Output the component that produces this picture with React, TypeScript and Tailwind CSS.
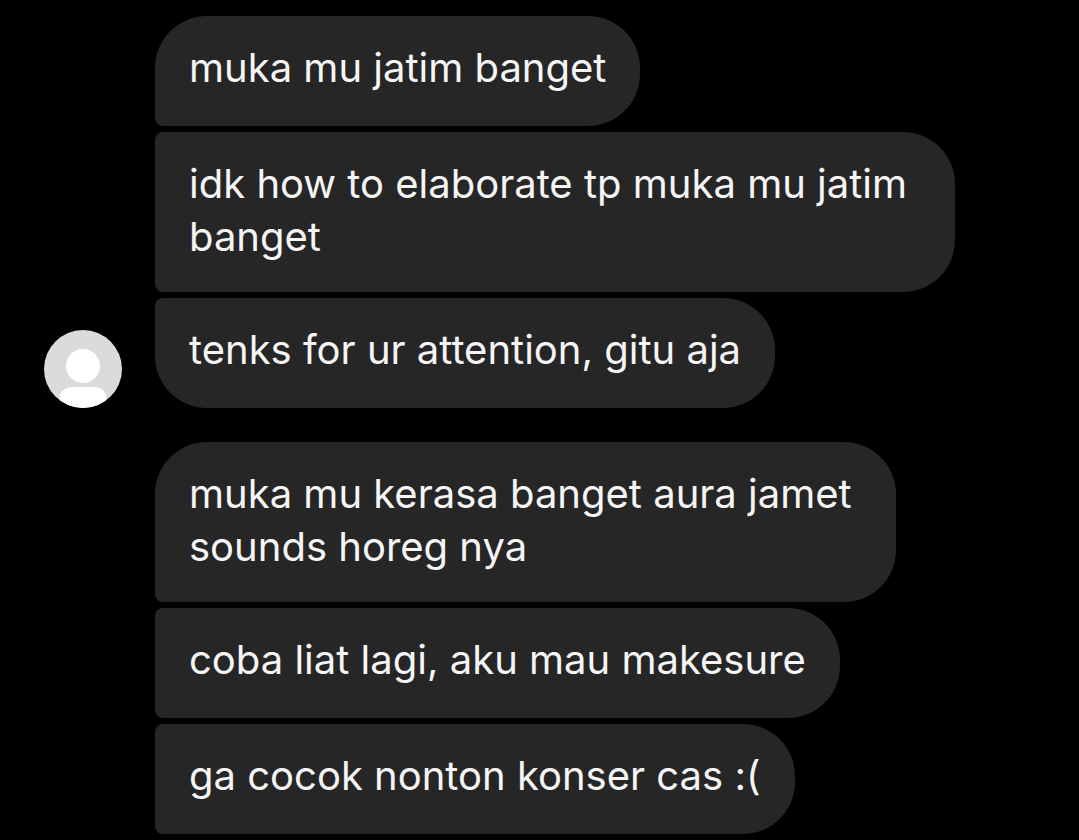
import React from "react";

type Message = {
  id: string;
  text: string;
  shape: string;
};

const groups: { id: string; avatar: boolean; messages: Message[] }[] = [
  {
    id: "group-1",
    avatar: true,
    messages: [
      { id: "m1", text: "muka mu jatim banget", shape: "max-w-[800px] pb-8 rounded-[52px] rounded-bl-lg" },
      { id: "m2", text: "idk how to elaborate tp muka mu jatim banget", shape: "max-w-[800px] pb-[29px] rounded-[52px] rounded-l-lg" },
      { id: "m3", text: "tenks for ur attention, gitu aja", shape: "max-w-[800px] pb-8 rounded-[52px] rounded-tl-lg" },
    ],
  },
  {
    id: "group-2",
    avatar: false,
    messages: [
      { id: "m4", text: "muka mu kerasa banget aura jamet sounds horeg nya", shape: "max-w-[741px] pb-[29px] rounded-[52px] rounded-bl-lg" },
      { id: "m5", text: "coba liat lagi, aku mau makesure", shape: "max-w-[800px] pb-8 rounded-[52px] rounded-l-lg" },
      { id: "m6", text: "ga cocok nonton konser cas :(", shape: "max-w-[800px] pb-8 rounded-[52px] rounded-l-lg" },
    ],
  },
];

function Avatar() {
  return (
    <svg viewBox="0 0 78 78" className="w-[78px] h-[78px] rounded-full" role="img" aria-label="Profile">
      <rect width="78" height="78" fill="#dbdbdb" />
      <circle cx="39" cy="36" r="17" fill="#fff" />
      <path d="M16 78V65Q19 57 29 57H49Q59 57 62 65V78Z" fill="#fff" />
    </svg>
  );
}

export default function App() {
  return (
    <main className="min-h-screen bg-black pt-4 pl-11 pr-5 font-['Inter',sans-serif] text-[40px] leading-[53px] text-[#f5f5f5]">
      <div className="flex flex-col gap-[34px]">
        {groups.map((group) => (
          <section key={group.id} className="flex items-end gap-[33px]">
            <div className="w-[78px] shrink-0">{group.avatar && <Avatar />}</div>
            <div className="flex flex-col items-start gap-1.5">
              {group.messages.map((message) => (
                <p key={message.id} className={`bg-[#262626] pt-[25px] px-[34px] ${message.shape}`}>
                  {message.text}
                </p>
              ))}
            </div>
          </section>
        ))}
      </div>
    </main>
  );
}
